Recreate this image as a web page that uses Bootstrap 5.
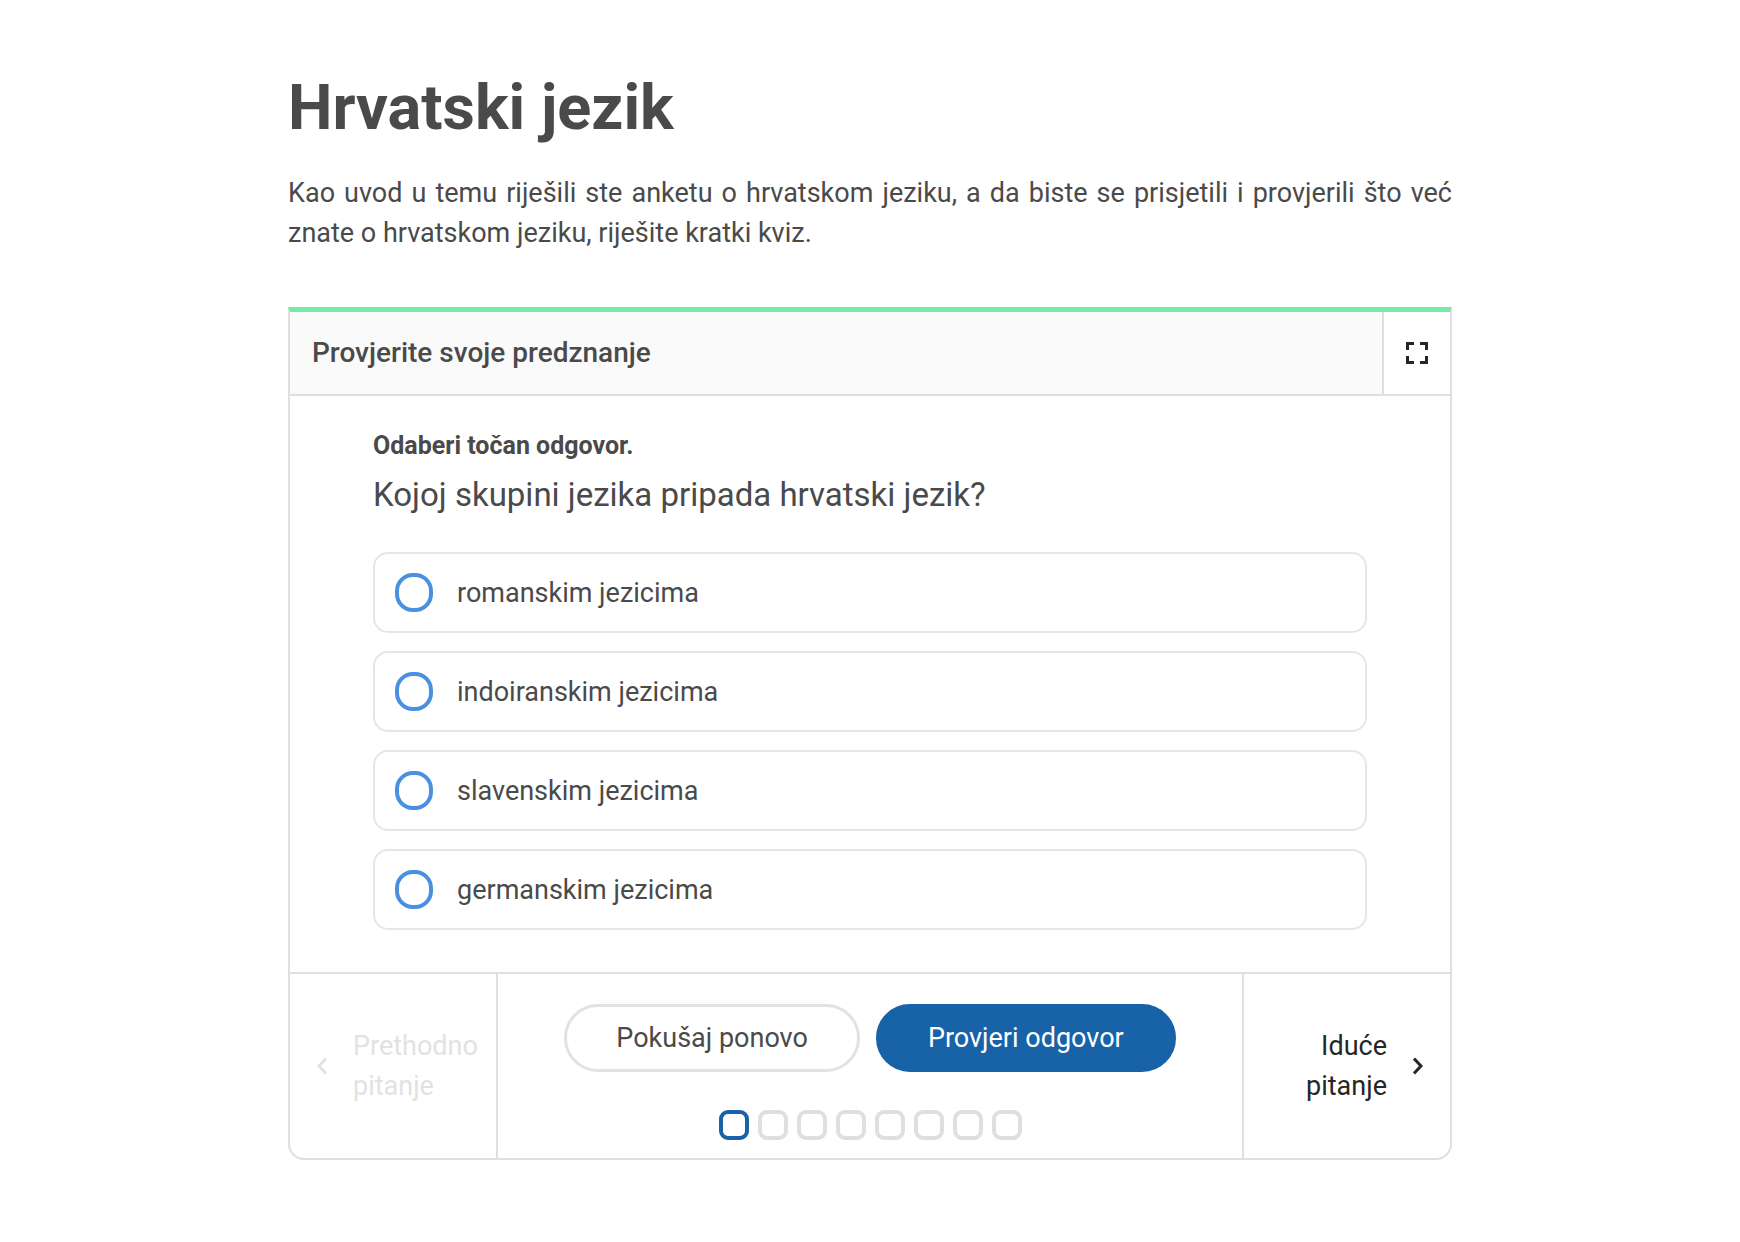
<!DOCTYPE html>
<html lang="hr">
<head>
<meta charset="utf-8">
<meta name="viewport" content="width=device-width, initial-scale=1">
<title>Hrvatski jezik</title>
<link href="https://cdn.jsdelivr.net/npm/bootstrap@5.3.0/dist/css/bootstrap.min.css" rel="stylesheet">
<style>
  :root {
    --line: #dfdfdf;
    --ink: #4a4a4a;
    --dark: #262626;
    --blue: #1862a8;
    --ring: #4a90e2;
  }
  body {
    font-family: Roboto, "Noto Sans", sans-serif;
    font-size: 27px;
    line-height: 40px;
    color: var(--ink);
    background: #fff;
  }
  .lesson { max-width: 1164px; padding-top: 72px; padding-bottom: 80px; }
  .lesson-title { font-size: 63px; line-height: 72px; font-weight: 700; margin-bottom: 29px; }
  .lesson-intro { text-align: justify; margin-bottom: 54px; }

  .quiz {
    border: 2px solid var(--line);
    border-top: 5px solid #76eaab;
    border-radius: 0 0 16px 16px;
  }
  .quiz-head { border-bottom: 2px solid var(--line); background: #fafafa; min-height: 84px; }
  .quiz-title { font-size: 28px; line-height: 40px; font-weight: 500; padding: 0 22px; margin: 0; }
  .quiz-full { width: 68px; border: 0; border-left: 2px solid var(--line); background: #fff; color: var(--dark); }

  .quiz-body { padding: 30px 83px 42px; }
  .quiz-prompt { font-size: 25px; line-height: 40px; font-weight: 700; margin-bottom: 5px; }
  .quiz-question { font-size: 33px; line-height: 48px; margin-bottom: 33px; }
  .quiz-options { gap: 18px; }
  .quiz-option {
    gap: 24px;
    min-height: 81px;
    padding: 0 20px;
    border: 2px solid #e6e6e6;
    border-radius: 15px;
    cursor: pointer;
  }
  .quiz-option .form-check-input {
    width: 38px;
    height: 39px;
    margin: 0;
    border: 4px solid var(--ring);
  }
  .quiz-option .form-check-input[type=radio] { border-radius: 18px; }

  .quiz-foot { border-top: 2px solid var(--line); }
  .quiz-nav {
    flex: 0 0 208px;
    gap: 26px;
    border: 0;
    background: transparent;
    color: var(--dark);
    padding: 0 27px;
  }
  .quiz-prev { border-right: 2px solid var(--line); text-align: left; padding-right: 14px; }
  .quiz-next { border-left: 2px solid var(--line); text-align: right; }
  .quiz-nav:disabled { color: #e2e2e2; }
  .quiz-actions { padding: 30px 16px 18px; gap: 38px; }
  .quiz-btn {
    --bs-btn-font-size: 27px;
    --bs-btn-line-height: 40px;
    --bs-btn-padding-x: 49px;
    --bs-btn-padding-y: 11px;
    --bs-btn-border-width: 3px;
  }
  .quiz-retry { --bs-btn-color: var(--ink); --bs-btn-border-color: #e2e2e2; --bs-btn-hover-border-color: #ccc; }
  .quiz-check {
    --bs-btn-color: #fff;
    --bs-btn-bg: var(--blue);
    --bs-btn-border-color: var(--blue);
    --bs-btn-hover-color: #fff;
    --bs-btn-hover-bg: #124f8a;
  }
  .quiz-steps { gap: 9px; }
  .quiz-step { width: 30px; height: 30px; padding: 0; border: 4px solid var(--line); border-radius: 9px; background: #fff; }
  .quiz-step[aria-current] { border-color: var(--blue); }
</style>
</head>
<body>
<main class="lesson container-fluid px-0">
  <h1 class="lesson-title">Hrvatski jezik</h1>
  <p class="lesson-intro">Kao uvod u temu riješili ste anketu o hrvatskom jeziku, a da biste se prisjetili i provjerili što već znate o hrvatskom jeziku, riješite kratki kviz.</p>

  <section class="quiz" aria-labelledby="quiz-title">
    <header class="quiz-head d-flex align-items-stretch">
      <h2 class="quiz-title flex-grow-1 align-self-center" id="quiz-title">Provjerite svoje predznanje</h2>
      <button type="button" class="quiz-full d-flex align-items-center justify-content-center p-0" aria-label="Cijeli zaslon">
        <svg width="22" height="22" viewBox="0 0 22 22" fill="none" stroke="currentColor" stroke-width="3" aria-hidden="true">
          <path d="M1.500 8V1.500H8M14 1.500H20.500V8M20.500 14V20.500H14M8 20.500H1.500V14"/>
        </svg>
      </button>
    </header>

    <form class="quiz-body">
      <p class="quiz-prompt">Odaberi točan odgovor.</p>
      <p class="quiz-question" id="question">Kojoj skupini jezika pripada hrvatski jezik?</p>
      <div class="quiz-options d-flex flex-column" role="radiogroup" aria-labelledby="question">
        <label class="quiz-option d-flex align-items-center" for="o1"><input class="form-check-input flex-shrink-0" type="radio" name="odgovor" id="o1"><span>romanskim jezicima</span></label>
        <label class="quiz-option d-flex align-items-center" for="o2"><input class="form-check-input flex-shrink-0" type="radio" name="odgovor" id="o2"><span>indoiranskim jezicima</span></label>
        <label class="quiz-option d-flex align-items-center" for="o3"><input class="form-check-input flex-shrink-0" type="radio" name="odgovor" id="o3"><span>slavenskim jezicima</span></label>
        <label class="quiz-option d-flex align-items-center" for="o4"><input class="form-check-input flex-shrink-0" type="radio" name="odgovor" id="o4"><span>germanskim jezicima</span></label>
      </div>
    </form>

    <footer class="quiz-foot d-flex align-items-stretch">
      <button type="button" class="quiz-nav quiz-prev d-flex align-items-center" disabled>
        <svg class="flex-shrink-0" width="10" height="18" viewBox="0 0 10 18" fill="none" stroke="currentColor" stroke-width="3" aria-hidden="true"><path d="M9 1.500L2 9L9 16.500"/></svg>
        <span>Prethodno pitanje</span>
      </button>
      <div class="quiz-actions flex-grow-1 d-flex flex-column align-items-center">
        <div class="d-flex flex-wrap justify-content-center gap-3">
          <button type="button" class="btn rounded-pill quiz-btn quiz-retry">Pokušaj ponovo</button>
          <button type="button" class="btn rounded-pill quiz-btn quiz-check">Provjeri odgovor</button>
        </div>
        <div class="quiz-steps d-flex">
          <button type="button" class="quiz-step" aria-label="Pitanje 1" aria-current="step"></button>
          <button type="button" class="quiz-step" aria-label="Pitanje 2"></button>
          <button type="button" class="quiz-step" aria-label="Pitanje 3"></button>
          <button type="button" class="quiz-step" aria-label="Pitanje 4"></button>
          <button type="button" class="quiz-step" aria-label="Pitanje 5"></button>
          <button type="button" class="quiz-step" aria-label="Pitanje 6"></button>
          <button type="button" class="quiz-step" aria-label="Pitanje 7"></button>
          <button type="button" class="quiz-step" aria-label="Pitanje 8"></button>
        </div>
      </div>
      <button type="button" class="quiz-nav quiz-next d-flex align-items-center justify-content-end">
        <span>Iduće pitanje</span>
        <svg class="flex-shrink-0" width="10" height="18" viewBox="0 0 10 18" fill="none" stroke="currentColor" stroke-width="3" aria-hidden="true"><path d="M1 1.500L8 9L1 16.500"/></svg>
      </button>
    </footer>
  </section>
</main>
<script src="https://cdn.jsdelivr.net/npm/bootstrap@5.3.0/dist/js/bootstrap.bundle.min.js"></script>
</body>
</html>
